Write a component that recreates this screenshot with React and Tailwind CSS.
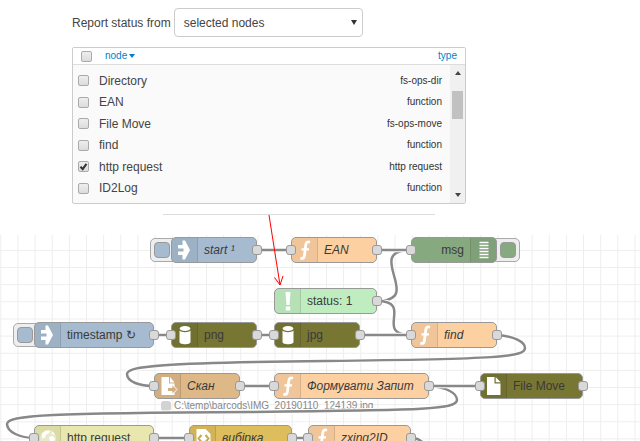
import React from "react";

const rows = [
  ["Directory", "fs-ops-dir"],
  ["EAN", "function"],
  ["File Move", "fs-ops-move"],
  ["find", "function"],
  ["http request", "http request"],
  ["ID2Log", "function"],
];

const nodes = [
  { id: "start", label: "start ¹", icon: "inject", x: 171, y: 2, w: 86, bg: "bg-[#a6bbcf]", italic: true, out: true, button: "left" },
  { id: "ean", label: "EAN", icon: "fn", x: 291, y: 2, w: 86, bg: "bg-[#fdd0a2]", italic: true, input: true, out: true },
  { id: "msg", label: "msg", icon: "debug", x: 411, y: 2, w: 86, bg: "bg-[#87a980]", input: true, button: "right" },
  { id: "status", label: "status: 1", icon: "alert", x: 274, y: 53, w: 103, bg: "bg-[#c0edc0]", out: true },
  { id: "timestamp", label: "timestamp ↻", icon: "inject", x: 34, y: 87, w: 120, bg: "bg-[#a6bbcf]", out: true, button: "left" },
  { id: "png", label: "png", icon: "db", x: 171, y: 87, w: 86, bg: "bg-[#777733]", input: true, out: true },
  { id: "jpg", label: "jpg", icon: "db", x: 274, y: 87, w: 86, bg: "bg-[#777733]", input: true, out: true },
  { id: "find", label: "find", icon: "fn", x: 411, y: 87, w: 86, bg: "bg-[#fdd0a2]", italic: true, input: true, out: true },
  { id: "scan", label: "Скан", icon: "fileOut", x: 154, y: 138, w: 86, bg: "bg-[#deb887]", italic: true, input: true, out: true },
  { id: "form", label: "Формувати Запит", icon: "fn", x: 274, y: 138, w: 155, bg: "bg-[#fdd0a2]", italic: true, input: true, out: true },
  { id: "move", label: "File Move", icon: "file", x: 480, y: 138, w: 103, bg: "bg-[#777733]", input: true, out: true },
  { id: "http", label: "http request", icon: "globe", x: 34, y: 190, w: 120, bg: "bg-[#e7e7ae]", input: true, out: true },
  { id: "select", label: "вибірка", icon: "code", x: 189, y: 190, w: 103, bg: "bg-[#debd5c]", italic: true, input: true, out: true },
  { id: "zxing", label: "zxing2ID", icon: "fn", x: 308, y: 190, w: 103, bg: "bg-[#fdd0a2]", italic: true, input: true, out: true },
];

const wires = [
  "M257 15H291",
  "M377 66C426 66 362 15 411 15",
  "M377 66C415 66 373 100 411 100",
  "M154 100H172",
  "M257 100H274",
  "M360 100H411",
  "M497 100C514 101 525 107 525 113C525 122 500 124 326 126C160 128 127 131 127 139C127 147 140 151 154 151",
  "M240 151H274",
  "M429 151C446 152 457 158 457 165C457 175 420 175 250 177C50 178 7 180 7 189C7 197 20 203 35 203",
  "M154 203H189",
  "M291 203H309",
  "M411 203C422 203 426 210 426 220",
  "M377 15H411",
  "M429 151H480",
];

const gridStep = 17.14;
const gridX = Array.from({ length: 120 }, (_, i) => 0.8 + i * gridStep);
const gridY = Array.from({ length: 60 }, (_, i) => 15.4 + i * gridStep);

const icons = {
  inject: (
    <path fill="#fff" d="M10.500 3.500h2.500l5 9.500-5 9.500h-2.500v-4.500H6v-3.500h5.500v-3H6V8h4.500z" />
  ),
  fn: (
    <g fill="none" stroke="#fff" strokeWidth="2.800">
      <path d="M18 5.300c-2.800-1-4 .2-4.300 3l-1.200 9.700c-.3 3-1.500 4-4.200 3.200" />
      <path strokeWidth="2.300" d="M9.500 12.300H17" />
    </g>
  ),
  alert: (
    <path fill="#fff" d="M10.500 4h5l-1 13h-3zM10.800 18.500h4.400v4h-4.400z" />
  ),
  db: (
    <g fill="#fff">
      <path d="M7.500 8.500c2 2.200 9 2.200 11 0V20c0 3-11 3-11 0z" />
      <ellipse cx="13" cy="6.500" rx="5.300" ry="2.500" />
    </g>
  ),
  file: (
    <path fill="#fff" d="M6 4h7.500v6.500h6V22H6zM14.700 4l5 5.300h-5z" />
  ),
  fileOut: (
    <g>
      <path fill="#fff" d="M6.500 4h7.500v6.500h5.500V22h-13zM15 4l4.500 5.500H15z" />
      <path fill="#d3af80" stroke="#fff" strokeWidth="1" d="M12.500 14.500h4.500v-3l5 5-5 5v-3h-4.500z" />
    </g>
  ),
  globe: (
    <g>
      <circle cx="13" cy="13" r="8" fill="#fff" fillOpacity=".4" />
      <path fill="#fff" d="M7 9c2-3 5-4 8-3.500l-1 3-3 1-1 3-3 1zM14 12l4-1 2 3-3 6-2-3zM17 6l3 4-3-1z" />
    </g>
  ),
  code: (
    <g>
      <path fill="#fff" d="M6.500 4h9l5 5v13h-14z" />
      <path fill="none" stroke="#c9a94e" strokeWidth="2" d="M11.500 10l-3 3.500 3 3.500M15.500 10l3 3.500-3 3.500" />
    </g>
  ),
  debug: (
    <path stroke="#fff" strokeWidth="1.500" d="M8.500 5.500h9M8.500 8.500h9M8.500 11.500h9M8.500 14.500h9M8.500 17.500h9M8.500 20.500h9" />
  ),
};

function Port({ side }) {
  return (
    <span
      className={
        "absolute top-[8px] size-[10px] rounded-[3px] border border-[#999] bg-[#d9d9d9] " +
        (side === "left" ? "-left-[5px]" : "-right-[5px]")
      }
    />
  );
}

function Node({ node }) {
  const right = node.button === "right";
  return (
    <div className="absolute h-[26px]" style={{ left: node.x, top: node.y, width: node.w }}>
      {node.button && (
        <button
          type="button"
          aria-label={"Trigger " + node.id}
          className={
            "absolute top-[1px] flex h-[24px] w-[28px] items-center rounded-[5px] border border-[#aaa] bg-[#eee] px-[3px] " +
            (right ? "-right-[23px] justify-end" : "-left-[21px]")
          }
        >
          <span className={"size-[16px] rounded-[4px] border border-[#999] " + node.bg} />
        </button>
      )}
      <div
        className={
          "relative flex h-full items-center overflow-hidden rounded-[5px] border border-[#999] " +
          (right ? "flex-row-reverse " : "") +
          node.bg
        }
      >
        <span
          className={
            "flex h-full w-[26px] shrink-0 items-center justify-center border-black/10 bg-black/5 " +
            (right ? "border-l" : "border-r")
          }
        >
          <svg className="size-[26px] shrink-0" viewBox="0 0 26 26" aria-hidden="true">
            {icons[node.icon]}
          </svg>
        </span>
        <span className={"whitespace-nowrap px-[6px] text-[12px] leading-[24px] text-[#3a3a3a] " + (node.italic ? "italic" : "")}>
          {node.label}
        </span>
      </div>
      {node.input && <Port side="left" />}
      {node.out && <Port side="right" />}
    </div>
  );
}

function Checkbox({ id, label, checked }) {
  return (
    <span className="relative block size-[11px]">
      <input
        id={id}
        type="checkbox"
        aria-label={label}
        defaultChecked={checked}
        className="peer block size-[11px] appearance-none rounded-[2px] border border-[#aaa] bg-linear-to-b from-[#eee] to-[#dcdcdc]"
      />
      <svg className="pointer-events-none absolute inset-0 hidden size-[11px] peer-checked:block" viewBox="0 0 11 11" aria-hidden="true">
        <path d="M2.500 5.800l2.200 2.400 3.800-5.400" fill="none" stroke="#333" strokeWidth="2" />
      </svg>
    </span>
  );
}

function NodeTable() {
  return (
    <div className="relative mt-[10px] w-full max-w-[394px] rounded-[2px] border border-[#ccc] bg-[#fafafa] pb-[4px]">
      <table className="w-full border-separate border-spacing-0">
        <thead>
          <tr className="text-[10px] leading-[16px] text-[#0080cc]">
            <th className="border-b border-[#ddd] bg-white pl-[8px] text-left font-normal">
              <div className="flex items-center gap-[13px]">
                <Checkbox id="all" label="Select all nodes" />
                <button type="button" className="flex items-center gap-[2px]">
                  node
                  <svg className="h-[4px] w-[6px]" viewBox="0 0 6 4" aria-hidden="true">
                    <path d="M0 0h6L3 4z" fill="currentColor" />
                  </svg>
                </button>
              </div>
            </th>
            <th className="border-b border-[#ddd] bg-white pr-[8px] text-right font-normal">
              <button type="button">type</button>
            </th>
          </tr>
        </thead>
        <tbody>
          <tr className="h-[5px]"><td colSpan={2} /></tr>
          {rows.map(([name, type], i) => (
            <tr key={name} className={i % 2 ? "h-[22px]" : "h-[21px]"}>
              <td className="pl-[5px]">
                <div className="flex items-center gap-[10px]">
                  <Checkbox id={"node-" + i} checked={name === "http request"} />
                  <label htmlFor={"node-" + i} className="text-[12px] leading-[20px] text-[#444]">{name}</label>
                </div>
              </td>
              <td className="pr-[23px] text-right text-[10px] leading-[20px] text-[#333]">{type}</td>
            </tr>
          ))}
        </tbody>
      </table>
      <div className="absolute top-[17px] right-0 bottom-0 flex w-[15px] flex-col items-center bg-[#f0f0f0] py-[6px]">
        <svg className="h-[4px] w-[6px]" viewBox="0 0 6 4" aria-hidden="true"><path d="M0 4h6L3 0z" fill="#444" /></svg>
        <div className="mt-[16px] h-[28px] w-[11px] bg-[#c1c1c1]" />
        <svg className="mt-auto h-[4px] w-[6px]" viewBox="0 0 6 4" aria-hidden="true"><path d="M0 0h6L3 4z" fill="#444" /></svg>
      </div>
    </div>
  );
}

export default function App() {
  return (
    <div className="relative flex min-h-screen flex-col bg-white font-['Liberation_Sans',Arial,sans-serif]">
      <section className="px-[72px] pt-[8px]">
        <div className="flex items-center gap-[3px]">
          <label htmlFor="source" className="text-[12px] text-[#444]">Report status from</label>
          <div className="relative w-[189px]">
            <select id="source" className="block h-[29px] w-full appearance-none rounded-[4px] border border-[#ccc] bg-white px-[9px] text-[12px] text-[#444]">
              <option>selected nodes</option>
            </select>
            <svg className="pointer-events-none absolute top-[12px] right-[6px] h-[5px] w-[6px]" viewBox="0 0 6 5" aria-hidden="true">
              <path d="M0 0h6L3 5z" fill="#333" />
            </svg>
          </div>
        </div>
        <NodeTable />
      </section>
      <hr className="mt-[10px] mb-[20px] ml-[163px] w-[272px] border-[#ddd]" />

      <main className="relative min-h-[206px] flex-1 overflow-hidden">
        <svg className="absolute inset-0 h-full w-full" aria-hidden="true">
          <g stroke="#eee" strokeWidth="1">
            {gridX.map((x) => <line key={x} x1={x} x2={x} y1="0" y2="1200" />)}
            {gridY.map((y) => <line key={y} x1="0" x2="2100" y1={y} y2={y} />)}
          </g>
        </svg>
        <div className="absolute top-[164px] left-[161px] flex items-center gap-[3px] text-[10px] leading-[14px] whitespace-nowrap text-[#888]">
          <span className="size-[10px] rounded-[3px] bg-[#d3d3d3]" />
          C:\temp\barcods\IMG_20190110_124139.jpg
        </div>
        <svg className="absolute inset-0 h-full w-full" aria-hidden="true">
          {wires.map((d) => (
            <g key={d} fill="none">
              <path d={d} stroke="#fff" strokeWidth="4.500" />
              <path d={d} stroke="#888" strokeWidth="2.500" />
            </g>
          ))}
        </svg>
        {nodes.map((node) => <Node key={node.id} node={node} />)}
      </main>

      <svg className="pointer-events-none absolute top-[215px] left-[264px] h-[72px] w-[24px]" viewBox="0 0 24 72" aria-hidden="true">
        <path d="M5 0L16 70M10.500 62.500L16 70l3-9" fill="none" stroke="#f00" strokeWidth="1" />
      </svg>
    </div>
  );
}
